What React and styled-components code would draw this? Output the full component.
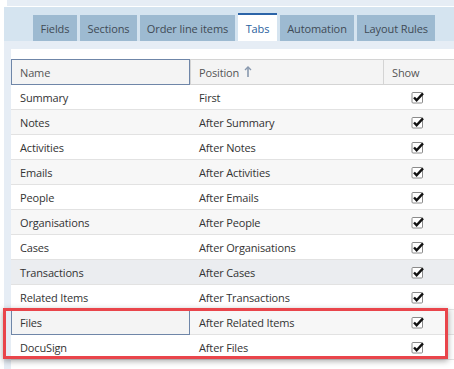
import React from 'react'
import styled, { createGlobalStyle } from 'styled-components'

const GlobalStyle = createGlobalStyle`
  body {
    margin: 0;
    background: #ffffff;
    font-family: "Open Sans", "Liberation Sans", sans-serif;
  }
`

// ***** page shell *****
const Page = styled.div`
  position: relative;
  width: 454px;
  height: 369px;
  overflow: hidden;
  background: #fff;
`
const TopStrip = styled.div`
  height: 6px;
  margin-left: 7px;
  background: #e6edf5;
  border-bottom: 1px solid #fff;
`
const TabBand = styled.div`
  height: 34px;
  margin-left: 4px;
  padding-left: 29px;
  background: #d5e4f0;
  display: flex;
  align-items: flex-end;
  gap: 3px;
`
const Tab = styled.div`
  flex-shrink: 0;
  white-space: nowrap;
  box-sizing: border-box;
  width: ${p => p.$w}px;
  height: ${p => (p.$active ? 28 : 26)}px;
  display: flex;
  align-items: center;
  justify-content: center;
  font-size: 11px;
  letter-spacing: -0.1px;
  color: ${p => (p.$active ? '#2b5f9e' : '#3f4a55')};
  background: ${p => (p.$active ? '#ffffff' : '#9dbad1')};
  border-top: ${p => (p.$active ? '2px solid #2b64a8' : 'none')};
`
const Body = styled.div`
  margin-left: 4px;
  padding: 8px 0 0 7px;
  background: #e6edf5;
  height: 320px;
`
const Panel = styled.div`
  background: #fff;
  padding-top: 10px;
  height: 100%;
`

// ***** grid table *****
const Row = styled.div`
  display: grid;
  grid-template-columns: 179px 193px 1fr;
  height: 24px;
  border-bottom: 1px solid #e2e2e2;
  background: ${p => p.$bg || '#fff'};
`
const HeadRow = styled(Row)`
  height: 24px;
  background: #f4f4f4;
  border-top: 1px solid #d4d4d4;
  border-bottom: 1px solid #d4d4d4;
`
const Cell = styled.div`
  display: flex;
  align-items: center;
  white-space: nowrap;
  padding-left: 8px;
  font-size: 11px;
  letter-spacing: -0.15px;
  color: ${p => (p.$head ? '#555' : '#333')};
  border-left: 1px solid ${p => (p.$focus ? '#6f86a8' : p.$head ? '#d4d4d4' : 'transparent')};
  border-right: ${p => (p.$focus ? '1px solid #6f86a8' : 'none')};
  border-top: ${p => (p.$focus ? '1px solid #6f86a8' : 'none')};
  border-bottom: ${p => (p.$focus ? '1px solid #6f86a8' : 'none')};
  margin-bottom: ${p => (p.$focus ? '-1px' : '0')};
  margin-top: ${p => (p.$focus ? '-1px' : '0')};
  background: ${p => (p.$focus ? '#f4f4f4' : 'transparent')};
`
const CheckCell = styled.div`
  display: flex;
  align-items: center;
  justify-content: center;
  padding-right: 3px;
`
const Highlight = styled.div`
  position: absolute;
  left: 3px;
  top: 308px;
  width: 439px;
  height: 45px;
  border: 3px solid #e9454b;
  box-shadow: 0 2px 6px rgba(0, 0, 0, 0.35);
  pointer-events: none;
`

const Arrow = () => (
  <svg width="8" height="12" viewBox="0 0 8 12" style={{ marginLeft: 5 }}>
    <path d="M4 1 L4 11" stroke="#8898ae" strokeWidth="1.6" />
    <path d="M1 4 L4 1 L7 4" stroke="#8898ae" strokeWidth="1.4" fill="none" />
  </svg>
)

const Check = () => (
  <svg width="13" height="13" viewBox="0 0 13 13">
    <rect x="1" y="1.5" width="10.5" height="10.5" rx="1" fill="#fff" stroke="#8a8a8a" />
    <path d="M3 6.5 L5.6 9.2 L12 2.4" stroke="#111" strokeWidth="2.4" fill="none" />
  </svg>
)

const tabs = [
  { label: 'Fields', w: 44 },
  { label: 'Sections', w: 57 },
  { label: 'Order line items', w: 95 },
  { label: 'Tabs', w: 39, active: true },
  { label: 'Automation', w: 74 },
  { label: 'Layout Rules', w: 78 },
]

const rows = [
  ['Summary', 'First'],
  ['Notes', 'After Summary'],
  ['Activities', 'After Notes'],
  ['Emails', 'After Activities'],
  ['People', 'After Emails'],
  ['Organisations', 'After People'],
  ['Cases', 'After Organisations'],
  ['Transactions', 'After Cases'],
  ['Related Items', 'After Transactions'],
  ['Files', 'After Related Items'],
  ['DocuSign', 'After Files'],
]

const rowBg = i => {
  if (i === 7) return '#ebedf0' // hovered row
  return i % 2 === 1 ? '#f7f7f7' : '#fff'
}

const App = () => {
  return (
    <Page>
      <GlobalStyle />
      <TopStrip />
      <TabBand>
        {tabs.map(t => (
          <Tab key={t.label} $active={t.active} $w={t.w}>{t.label}</Tab>
        ))}
      </TabBand>
      <Body>
        <Panel>
          <HeadRow>
            <Cell $head $focus>Name</Cell>
            <Cell $head>Position <Arrow /></Cell>
            <Cell $head>Show</Cell>
          </HeadRow>
          {rows.map(([name, pos], i) => (
            <Row key={name} $bg={rowBg(i)}>
              <Cell $focus={name === 'Files'}>{name}</Cell>
              <Cell>{pos}</Cell>
              <CheckCell><Check /></CheckCell>
            </Row>
          ))}
        </Panel>
      </Body>
      <Highlight />
    </Page>
  )
}

export default App
